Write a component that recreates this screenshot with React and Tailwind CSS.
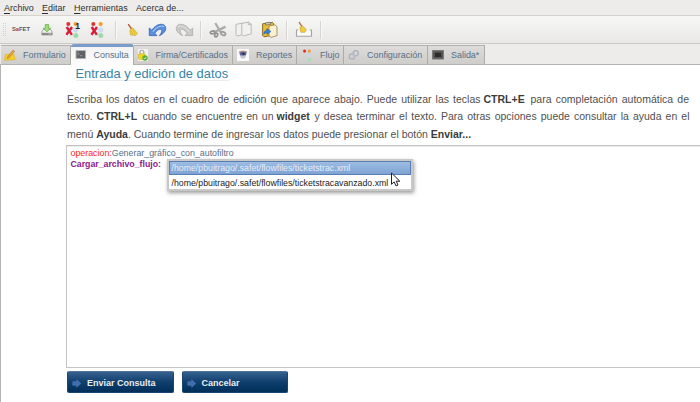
const MENU = [
  ["A", "rchivo", "w-[38px]"],
  ["E", "ditar", "w-[32px]"],
  ["H", "erramientas", "w-[62px]"],
  ["", "Acerca de...", "w-[60px]"],
];

function Separator({ className }) {
  return <span className={`h-[18px] w-px shrink-0 bg-[#d6d4d1] shadow-[1px_0_0_#fafafa] ${className}`} />;
}

function Grip() {
  return (
    <svg className="ml-[3px] shrink-0" width="4" height="13" viewBox="0 0 4 13">
      {[0, 2, 4, 6, 8, 10, 12].map((y) => (
        <g key={y} fill="#d3d1ce">
          <rect x="0" y={y} width="1" height="1" />
          <rect x="2" y={y} width="1" height="1" />
        </g>
      ))}
    </svg>
  );
}

function SafetLogo() {
  return (
    <span className="mt-px ml-[5px] flex w-[18px] shrink-0 justify-center text-[5.8px] leading-none font-bold text-[#5d5755]">
      S<span className="text-[#c23a40]">a</span>FET
    </span>
  );
}

function SaveIcon() {
  return (
    <svg className="ml-[11px] shrink-0" width="12" height="13" viewBox="0 0 12 13">
      <path d="M2.2 6.5h7.6l1.4 2.5v3H.8V9z" fill="#f0efed" stroke="#8c8c8a" strokeWidth=".7" />
      <path d="M1 9.8h10V12H1z" fill="#8b8b89" />
      <path d="M4.3 1.6h3.4v3.6h2L6 8.9 2.3 5.2h2z" fill="#a0dc7a" stroke="#62a83d" strokeWidth=".7" />
      <path d="M7.5 10.9h2.5" stroke="#e7e7e5" strokeWidth=".6" />
    </svg>
  );
}

function GraphIcon({ one, className }) {
  return (
    <svg className={`shrink-0 ${className}`} width="16" height="18" viewBox="0 0 16 18">
      <path d="M3.5 2.5v6h7M11 3v11" stroke="#c9cdda" strokeWidth=".8" fill="none" />
      <rect x="8.2" y="7" width="5" height="4" rx="1.2" fill="#cfdaf1" />
      <circle cx="3.3" cy="3" r="2" fill="#e5322c" />
      <circle cx="10.6" cy="3" r="2.1" fill="#f2a029" />
      <circle cx="10.8" cy="14.6" r="2.5" fill="#9ddbab" />
      <path d="M1.6 6 6.9 13.8M7 6 1.4 13.8" stroke="#d51f38" strokeWidth="2.4" />
      {one && (
        <text x="10.2" y="7.8" fontSize="8.5" fontWeight="700" fontFamily="Liberation Sans, sans-serif" fill="#222">
          1
        </text>
      )}
    </svg>
  );
}

function BroomIcon({ className }) {
  return (
    <svg className={`shrink-0 ${className}`} width="11" height="13" viewBox="0 0 11 13">
      <path d="M1.2 1.2 4.6 6" stroke="#b3552c" strokeWidth="1.3" />
      <path d="m2.8 7 3-2.2 4.7 5.8-2 1.9-5-.5z" fill="#f0d13c" stroke="#b9972b" strokeWidth=".5" />
      <path d="m4.6 7.6.8 4M6 6.8l2.4 4.6" stroke="#c7a52c" strokeWidth=".4" />
    </svg>
  );
}

function CurvedArrow({ redo, className }) {
  return (
    <svg className={`shrink-0 ${className}`} width="19" height="14" viewBox="0 0 19 14">
      <g transform={redo ? "matrix(-1 0 0 1 19 0)" : undefined}>
        <path
          d="M1.3 5v7.6h7.6L6.8 10.2C8.5 7.5 11.6 5.4 13.2 6.6c1.3 1 .4 3.2-1.8 6.1 4-1.7 6.7-5 6.3-8.1C17.2.2 9.3-.7 3.8 7.2z"
          fill={redo ? "#c9c9c7" : "#5a8fe0"}
          stroke={redo ? "#acacaa" : "#2f5fb4"}
          strokeWidth=".8"
          strokeLinejoin="round"
        />
        <path d="M4.8 8.6C9 3.1 14 1.9 16.4 4.2" stroke={redo ? "#dededc" : "#a9caf4"} strokeWidth="1.1" fill="none" />
      </g>
    </svg>
  );
}

function ScissorsIcon() {
  return (
    <svg className="ml-[8px] shrink-0" width="18" height="16" viewBox="0 0 18 16" fill="none">
      <path d="M6.3 1 11.6 10.2M16.6 4.6 5 10.4" stroke="#adadab" strokeWidth="2.3" />
      <ellipse cx="3.5" cy="10.4" rx="2.2" ry="1.4" transform="rotate(-15 3.5 10.4)" stroke="#929290" strokeWidth="1.8" />
      <ellipse cx="7.2" cy="13" rx="1.4" ry="1.9" transform="rotate(25 7.2 13)" stroke="#929290" strokeWidth="1.7" />
      <ellipse cx="14.2" cy="11.6" rx="2.4" ry="1.6" transform="rotate(25 14.2 11.6)" stroke="#9c9c9a" strokeWidth="1.8" />
    </svg>
  );
}

function CopyIcon() {
  return (
    <svg className="ml-[8px] shrink-0" width="17" height="17" viewBox="0 0 17 17">
      <g fill="#f1f1ef" stroke="#b2b2b0" strokeWidth=".9" strokeLinejoin="round">
        <path d="M1 3.4 7.6 2l1.6 1.6v9.6L2.2 15 1 13.8z" />
        <path d="m6.8 2.4 6.6-1.4 2.8 2v9.8L8.4 15l-1.6-1.6z" />
        <path d="M13.2 1.2v2.4l2.8-.4" fill="none" />
      </g>
    </svg>
  );
}

function PasteIcon() {
  return (
    <svg className="ml-[9px] shrink-0" width="17" height="18" viewBox="0 0 17 18">
      <path d="M1.6 2.8 11.6 1.4l1 1.4V14L3 15.8 1.6 14.4z" fill="#e9bd35" stroke="#80601c" strokeWidth=".9" />
      <path d="m4.4 1.9 4.8-.7.6 2.1-5.2.8z" fill="#c7c7bb" stroke="#5f5f55" strokeWidth=".6" />
      <path d="m8 5 5.8-1.2L16 5.6v9l-6 1.8L8 14.6z" fill="#f8f1d6" stroke="#98803f" strokeWidth=".8" />
      <path d="M2.8 13.2c0-2.4 1.2-3.8 3-3.8V7.6l4 3-3.6 2.8v-1.5c-1.3-.1-2.3.3-3.4 1.3z" fill="#2f83e5" stroke="#194e9d" strokeWidth=".5" />
    </svg>
  );
}

function ClearTrayIcon() {
  return (
    <svg className="ml-[8px] shrink-0" width="18" height="17" viewBox="0 0 18 17">
      <path d="M3.2 9H1.5v6.3h15V9h-1.7" fill="#fafaf9" stroke="#a4a4a2" strokeWidth="1.1" />
      <path d="m4 1 2.8 4.4" stroke="#bb5a2b" strokeWidth="1.2" />
      <path d="m5 6.5 2.6-1.5 3.7 3.6-1.5 2.7H5.8z" fill="#f0cc35" stroke="#b18b21" strokeWidth=".5" />
    </svg>
  );
}

function Toolbar() {
  return (
    <div className="flex h-[29px] items-center border-y border-t-[#d5d3d0] border-b-[#cbc9c6] bg-linear-to-b from-[#f7f7f6] to-[#e9e8e6]">
      <Grip />
      <SafetLogo />
      <SaveIcon />
      <GraphIcon one className="ml-[12px]" />
      <GraphIcon className="ml-[9px]" />
      <Separator className="ml-[9px]" />
      <BroomIcon className="ml-[11px]" />
      <CurvedArrow className="ml-[10px]" />
      <CurvedArrow redo className="ml-[8px]" />
      <Separator className="ml-[6px]" />
      <ScissorsIcon />
      <CopyIcon />
      <PasteIcon />
      <Separator className="ml-[8px]" />
      <ClearTrayIcon />
      <Separator className="ml-[7px]" />
    </div>
  );
}

function PencilIcon() {
  return (
    <svg width="12" height="12" viewBox="0 0 12 12">
      <path d="m1.4 5.6 8.2-.6 1.6 5.6-10.6.7z" fill="#f5cf26" stroke="#dcb01c" strokeWidth=".6" />
      <path d="m3.5 8 5.4-6.8 1.7 1.2-5.6 6.4-1.9.6z" fill="#e9a636" stroke="#a8702a" strokeWidth=".5" />
    </svg>
  );
}

function TerminalIcon() {
  return (
    <svg width="12" height="12" viewBox="0 0 12 12">
      <rect x="1" y="1.6" width="9.6" height="8" fill="#5f6264" stroke="#b7b7b5" strokeWidth=".9" />
      <path d="m2.5 3.6 1.6 1.2L2.5 6M4.8 6.7h2.6" stroke="#b5b5b5" strokeWidth=".6" fill="none" />
    </svg>
  );
}

function LockIcon() {
  return (
    <svg width="12" height="12" viewBox="0 0 12 12">
      <rect width="10" height="12" x="1" fill="#f2f2f0" />
      <path d="M3 6V3.2C3 .6 6.8.6 6.8 3.2V6" fill="none" stroke="#aaa" strokeWidth="1.2" />
      <rect x="1.5" y="4.8" width="6.6" height="5.6" rx=".8" fill="#f1d622" stroke="#c7a615" strokeWidth=".5" />
      <circle cx="8" cy="9" r="2.7" fill="#52ad3b" />
      <path d="m6.7 9 1 1 1.6-1.9" stroke="#fff" strokeWidth=".8" fill="none" />
    </svg>
  );
}

function ReportIcon() {
  return (
    <svg width="12" height="12" viewBox="0 0 12 12">
      <rect width="12" height="12" fill="#fafafa" />
      <ellipse cx="6" cy="3.2" rx="4.2" ry="1.7" fill="#b99a8a" />
      <ellipse cx="6" cy="5" rx="3.3" ry="2.2" fill="#5c629c" />
      <path d="M3 6.4c.6 4.4 5.4 4.4 6 0z" fill="#c3c4d4" />
      <circle cx="6.4" cy="4.8" r="1.1" fill="#23264e" />
    </svg>
  );
}

function FlowIcon() {
  return (
    <svg width="12" height="13" viewBox="0 0 12 13">
      <path d="M7.6 2v9" stroke="#d3d7e3" strokeWidth=".8" />
      <circle cx="2.6" cy="2.1" r="1.6" fill="#e82f2b" />
      <circle cx="7.3" cy="2.1" r="1.6" fill="#f19b32" />
      <circle cx="7.5" cy="6.6" r="1.6" fill="#c8d5ef" />
      <circle cx="7.5" cy="10.6" r="1.8" fill="#a3dfb0" />
    </svg>
  );
}

function LinkIcon() {
  return (
    <svg width="12" height="12" viewBox="0 0 12 12" fill="none" stroke="#a9adbd" strokeWidth="1.1">
      <circle cx="4" cy="7.6" r="2.7" />
      <circle cx="7.7" cy="4.2" r="2.6" />
      <circle cx="5.8" cy="6" r="1.2" stroke="#c0c3d2" />
    </svg>
  );
}

function ScreenIcon() {
  return (
    <svg width="12" height="12" viewBox="0 0 12 12">
      <rect x=".6" y="1.6" width="10.8" height="8.4" fill="#555" stroke="#777" strokeWidth="1" />
      <rect x="2.3" y="3.2" width="7.4" height="5.2" fill="#2a2a2a" stroke="#777" strokeWidth=".4" />
    </svg>
  );
}

const TABS = [
  { label: "Formulario", Icon: PencilIcon, width: "w-[70px]", pad: "pl-[3px]", gap: "gap-[7px]" },
  { label: "Consulta", Icon: TerminalIcon, width: "w-[63px]", pad: "pl-[4px]", gap: "gap-[6.5px]", active: true },
  { label: "Firma/Certificados", Icon: LockIcon, width: "w-[99px]", pad: "pl-[3px]", gap: "gap-[6.5px]" },
  { label: "Reportes", Icon: ReportIcon, width: "w-[64px]", pad: "pl-[4px]", gap: "gap-[7px]" },
  { label: "Flujo", Icon: FlowIcon, width: "w-[47px]", pad: "pl-[5px]", gap: "gap-[6px]" },
  { label: "Configuración", Icon: LinkIcon, width: "w-[84px]", pad: "pl-[4px]", gap: "gap-[7px]" },
  { label: "Salida*", Icon: ScreenIcon, width: "w-[57px]", pad: "pl-[4px]", gap: "gap-[7px]" },
];

function Tab({ label, Icon, width, pad, gap, active }) {
  const look = active
    ? "-mb-px h-[21px] rounded-t-[3px] border-t-[3px] border-t-[#7b9cc9] bg-linear-to-b from-[#f4f3f3] to-[#fdfdfd] pb-[2px]"
    : "h-[19px] border-t border-t-[#b5b3b0] bg-linear-to-b from-[#dddcda] to-[#cecdca]";
  return (
    <div className={`flex shrink-0 items-center border-r border-r-[#aeaca9] text-[#54708a] ${width} ${pad} ${gap} ${look}`}>
      <span className="shrink-0"><Icon /></span>
      <span className="pt-[2px] whitespace-nowrap">{label}</span>
    </div>
  );
}

function Span({ width, bold, children }) {
  return (
    <span className={`block shrink-0 whitespace-nowrap ${width} ${bold ? "font-bold text-[#3c3c3c]" : ""}`}>
      {children}
    </span>
  );
}

function ActionButton({ label }) {
  return (
    <button className="flex h-[22px] w-[106.5px] items-center rounded-[2px] border border-[#1a4672] border-t-[#52749d] bg-linear-to-b from-[#36618f] via-[#0f3f6d] to-[#012f5a] pl-[4px] text-[9px] font-bold text-[#e9edf2]">
      <svg className="mt-[3px]" width="10" height="9" viewBox="0 0 11 10">
        <path d="M.8 3h4.4V.8L9.8 5 5.2 9.2V7H.8z" fill="#3e6eaf" stroke="#5682bd" strokeWidth=".6" />
      </svg>
      <span className="mt-[3px] ml-[5px] whitespace-nowrap">{label}</span>
    </button>
  );
}

export default function App() {
  return (
    <div className="flex h-[402px] w-[700px] flex-col overflow-hidden bg-[#edeceb] font-['Liberation_Sans',Arial,sans-serif] text-[8.95px]">
      <nav className="flex h-[15px] items-center pt-[2px] pl-[4px] text-[#2f2f2f]">
        {MENU.map(([key, rest, width]) => (
          <span key={rest} className={`whitespace-nowrap ${width}`}>
            <span className="underline underline-offset-2">{key}</span>
            {rest}
          </span>
        ))}
      </nav>
      <Toolbar />
      <div className="flex h-[21px] items-end border-b border-[#b5b3b0] pl-px">
        {TABS.map((tab) => <Tab key={tab.label} {...tab} />)}
      </div>
      <main className="flex grow flex-col border-l border-[#b5b3b0] bg-white pl-[65px]">
        <h1 className="ml-[9.5px] h-[16px] w-[153px] border-b border-[#ececec] text-[12.9px] leading-[17px] whitespace-nowrap text-[#3583a8]">
          Entrada y edición de datos
        </h1>
        <div className="mt-[10px] ml-px w-[623px] text-[10.5px] leading-[17.3px] text-[#505050]">
          <div className="flex [text-align-last:justify]">
            <Span width="w-[413.5px]">
              Escriba los datos en el cuadro de edición que aparece abajo. Puede utilizar las teclas
            </Span>
            <Span bold width="ml-[3px] w-[42px]">CTRL+E</Span>
            <Span width="ml-[5px] w-[158.5px]">para completación automática de</Span>
          </div>
          <div className="flex [text-align-last:justify]">
            <Span width="w-[26px]">texto.</Span>
            <Span bold width="ml-[3.5px] w-[41px]">CTRL+L</Span>
            <Span width="ml-[5px] w-[131px]">cuando se encuentre en un</Span>
            <Span bold width="ml-[3px] w-[34px]">widget</Span>
            <Span width="ml-[4px] w-[375px]">
              y desea terminar el texto. Para otras opciones puede consultar la ayuda en el
            </Span>
          </div>
          <div className="whitespace-nowrap">
            menú <b className="text-[#3c3c3c]">Ayuda</b>. Cuando termine de ingresar los datos puede presionar el botón{" "}
            <b className="text-[#3c3c3c]">Enviar...</b>
          </div>
        </div>
        <section className="mt-[2px] h-[223px] border border-r-0 border-[#c4c4c4] pt-[2.5px] pl-[3.5px] text-[8.85px] leading-[11px] shadow-[inset_0_1px_0_#ebebeb]">
          <p className="text-[#54708a]">
            <span className="text-[#ff2420]">operacion:</span>Generar_gráfico_con_autofiltro
          </p>
          <div className="relative font-bold text-[#8b1a8f]">
            <span className="text-[8.75px]">Cargar_archivo_flujo:</span>
            <ul className="absolute top-[-0.4px] left-[96.5px] w-[245.5px] border-2 border-[#c9c8c6] bg-white text-[8.78px] font-normal whitespace-nowrap text-[#222] shadow-[1px_2px_4px_rgba(0,0,0,0.4)]">
              <li className="flex h-[14px] items-center border border-[#587fb3] bg-linear-to-b from-[#9dbce2] to-[#7fa3d4] pt-px pl-[1.5px] text-[#e6eef9]">
                /home/pbuitrago/.safet/flowfiles/ticketstrac.xml
              </li>
              <li className="flex h-[14px] items-center pt-[2px] pl-[2.5px]">
                /home/pbuitrago/.safet/flowfiles/ticketstracavanzado.xml
              </li>
            </ul>
            <svg className="absolute top-[13px] left-[319.5px]" width="11" height="16" viewBox="0 0 11 16">
              <path d="M1.5 1v11.3l2.6-2.4 1.9 4 2-.9-1.8-3.8h3.6z" fill="#fff" stroke="#222" strokeWidth="1" />
            </svg>
          </div>
        </section>
        <div className="mt-[3px] ml-px flex gap-[8px]">
          <ActionButton label="Enviar Consulta" />
          <ActionButton label="Cancelar" />
        </div>
      </main>
    </div>
  );
}
